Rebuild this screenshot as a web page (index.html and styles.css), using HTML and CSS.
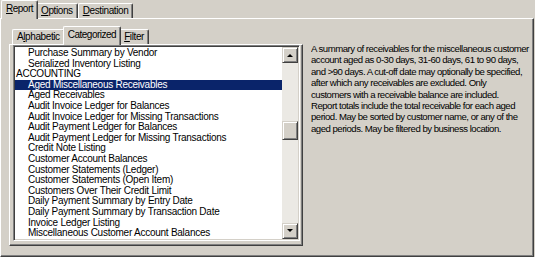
FILE: index.html
```html
<!DOCTYPE html>
<html lang="en">
<head>
  <meta charset="UTF-8" />
  <title>Report Selection</title>
  <link rel="stylesheet" href="styles.css">
</head>

<body>
  <div class="window">

    <!-- Pestañas principales -->
    <div class="tab-strip">
      <div class="tab active"><u>R</u>eport</div>
      <div class="tab"><u>O</u>ptions</div>
      <div class="tab"><u>D</u>estination</div>
    </div>

    <div class="tab-panel outer-panel">

      <!-- Lista de informes con sus pestañas -->
      <div class="report-picker">
        <div class="tab-strip inner">
          <div class="tab">A<u>l</u>phabetic</div>
          <div class="tab active">Categorized</div>
          <div class="tab"><u>F</u>ilter</div>
        </div>

        <div class="tab-panel inner-panel">
          <div class="listbox">
            <div class="list-items">
              <div class="item">Purchase Summary by Vendor</div>
              <div class="item">Serialized Inventory Listing</div>
              <div class="item category">ACCOUNTING</div>
              <div class="item selected">Aged Miscellaneous Receivables</div>
              <div class="item">Aged Receivables</div>
              <div class="item">Audit Invoice Ledger for Balances</div>
              <div class="item">Audit Invoice Ledger for Missing Transactions</div>
              <div class="item">Audit Payment Ledger for Balances</div>
              <div class="item">Audit Payment Ledger for Missing Transactions</div>
              <div class="item">Credit Note Listing</div>
              <div class="item">Customer Account Balances</div>
              <div class="item">Customer Statements (Ledger)</div>
              <div class="item">Customer Statements (Open Item)</div>
              <div class="item">Customers Over Their Credit Limit</div>
              <div class="item">Daily Payment Summary by Entry Date</div>
              <div class="item">Daily Payment Summary by Transaction Date</div>
              <div class="item">Invoice Ledger Listing</div>
              <div class="item">Miscellaneous Customer Account Balances</div>
            </div>

            <!-- Barra de desplazamiento -->
            <div class="scrollbar">
              <div class="scroll-btn"><span class="arrow up"></span></div>
              <div class="scroll-track">
                <div class="scroll-thumb"></div>
              </div>
              <div class="scroll-btn"><span class="arrow down"></span></div>
            </div>
          </div>
        </div>
      </div>

      <!-- Descripción del informe seleccionado -->
      <div class="description">A summary of receivables for the miscellaneous customer<br>account aged as 0-30 days, 31-60 days, 61 to 90 days,<br>and &gt;90 days. A cut-off date may optionally be specified,<br>after which any receivables are excluded. Only<br>customers with a receivable balance are included.<br>Report totals include the total receivable for each aged<br>period. May be sorted by customer name, or any of the<br>aged periods. May be filtered by business location.</div>
    </div>
  </div>
</body>
</html>
```

FILE: styles.css
```css
body {
  margin: 0;
  padding: 0;
  background-color: #d4d0c8;
  font-family: 'Liberation Sans Narrow', 'Liberation Sans', Arial, sans-serif;
  font-size: 10px;
  letter-spacing: -0.25px;
  color: #000000;
}

.window {
  width: 535px;
  height: 257px;
  padding: 0 1px 2px 0;
  box-sizing: border-box;
  display: flex;
  flex-direction: column;
}

/* Pestañas */
.tab-strip {
  display: flex;
  align-items: flex-end;
  padding-left: 3px;
  height: 18px;
  position: relative;
  z-index: 1;
}

.tab {
  height: 15px;
  line-height: 14px;
  padding: 0 4px;
  letter-spacing: -0.4px;
  border: 1px solid #ffffff;
  border-right: 1px solid #404040;
  border-bottom: none;
  border-radius: 2px 2px 0 0;
  box-shadow: inset -1px 0 #808080;
  box-sizing: border-box;
  background-color: #d4d0c8;
  white-space: nowrap;
}

.tab.active {
  height: 19px;
  line-height: 16px;
  margin: 0 -2px -1px;
  padding: 0 4px;
  letter-spacing: -0.5px;
  position: relative;
  z-index: 2;
}

.tab-panel {
  border: 1px solid;
  border-color: #ffffff #404040 #404040 #ffffff;
  box-shadow: inset -1px -1px #808080;
  background-color: #d4d0c8;
}

.outer-panel {
  flex: 1;
  display: flex;
  padding: 8px 2px 10px 8px;
}

.report-picker {
  width: 294px;
  flex-shrink: 0;
  display: flex;
  flex-direction: column;
}

.tab-strip.inner {
  padding-left: 3px;
  height: 17px;
}

.inner-panel {
  flex: 1;
  padding: 0 2px 4px 3px;
  display: flex;
}

/* Lista */
.listbox {
  flex: 1;
  display: flex;
  background-color: #ffffff;
  border: 1px solid;
  border-color: #808080 #ffffff #ffffff #808080;
  box-shadow: inset 1px 1px #404040, inset -1px -1px #d4d0c8;
  padding: 1px;
  overflow: hidden;
}

.list-items {
  flex: 1;
  padding-top: 1px;
  overflow: hidden;
}

.item {
  height: 10.6px;
  line-height: 10.6px;
  padding-left: 13px;
  white-space: nowrap;
}

.item.category {
  padding-left: 1px;
}

.item.selected {
  background-color: #0a246a;
  color: #ffffff;
}

.scrollbar {
  width: 16px;
  display: flex;
  flex-direction: column;
}

.scroll-btn,
.scroll-thumb {
  height: 16px;
  box-sizing: border-box;
  background-color: #d4d0c8;
  border: 1px solid;
  border-color: #d4d0c8 #404040 #404040 #d4d0c8;
  box-shadow: inset 1px 1px #ffffff, inset -1px -1px #808080;
  display: flex;
  align-items: center;
  justify-content: center;
}

.scroll-track {
  flex: 1;
  background-color: #ebe9e4;
  padding-top: 58px;
}

.scroll-thumb {
  height: 19px;
}

.arrow {
  width: 0;
  height: 0;
  border-left: 3px solid transparent;
  border-right: 3px solid transparent;
}

.arrow.up {
  border-bottom: 3px solid #000000;
}

.arrow.down {
  border-top: 3px solid #000000;
}

/* Descripción */
.description {
  flex: 1;
  min-width: 0;
  overflow: hidden;
  margin-left: 8px;
  padding-top: 16px;
  font-size: 9.6px;
  line-height: 11.4px;
  letter-spacing: -0.5px;
  white-space: nowrap;
}
```
